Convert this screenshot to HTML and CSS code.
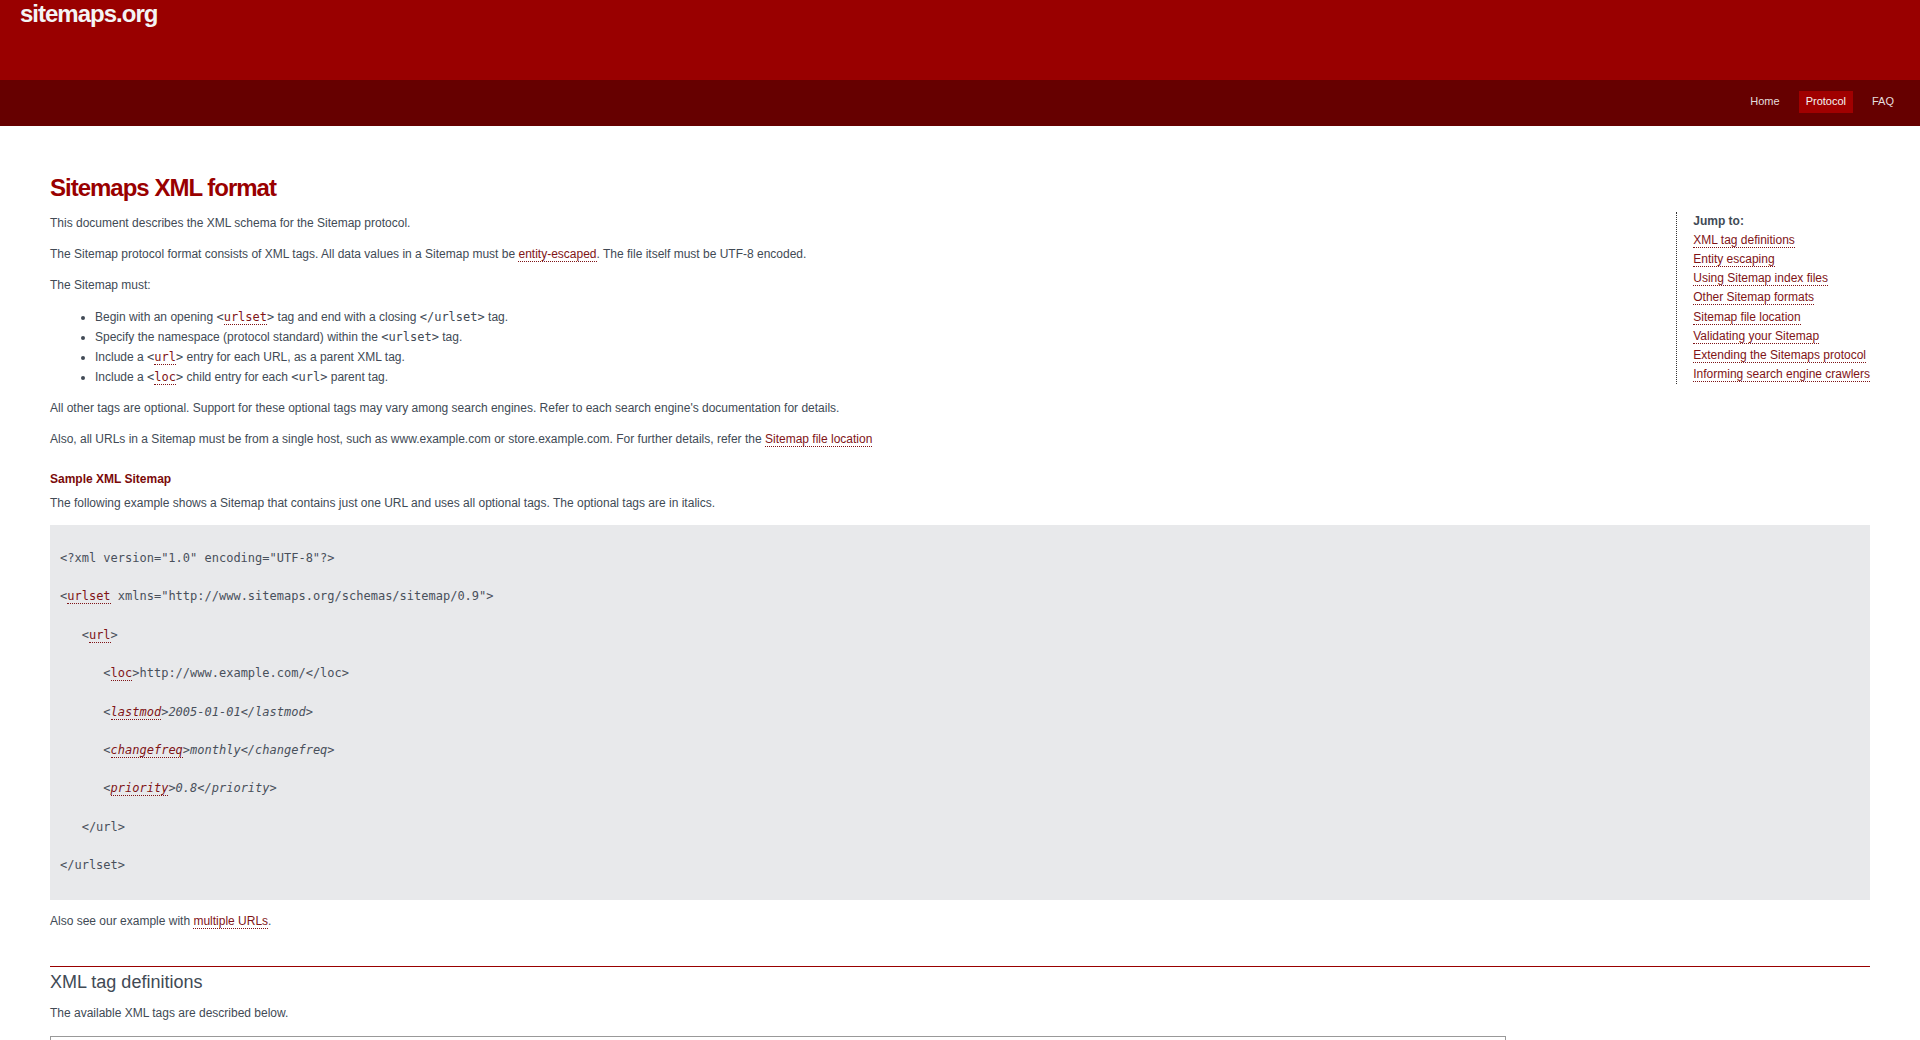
FILE: index.html
```html
<!DOCTYPE html>
<html lang="en">
<head>
<meta charset="utf-8">
<title>sitemaps.org - Protocol</title>
<link rel="stylesheet" href="styles.css">
</head>
<body>
<header class="top">
  <div class="brand"><a class="brand-link" href="#">sitemaps.org</a></div>
</header>
<nav class="navbar">
  <a class="nav-item" href="#">Home</a>
  <a class="nav-item active" href="#">Protocol</a>
  <a class="nav-item" href="#">FAQ</a>
</nav>
<main class="content">
  <h1 class="title">Sitemaps XML format</h1>
  <aside class="jump">
    <div class="jump-title">Jump to:</div>
    <ul class="jump-list">
      <li><a class="lnk" href="#">XML tag definitions</a></li>
      <li><a class="lnk" href="#">Entity escaping</a></li>
      <li><a class="lnk" href="#">Using Sitemap index files</a></li>
      <li><a class="lnk" href="#">Other Sitemap formats</a></li>
      <li><a class="lnk" href="#">Sitemap file location</a></li>
      <li><a class="lnk" href="#">Validating your Sitemap</a></li>
      <li><a class="lnk" href="#">Extending the Sitemaps protocol</a></li>
      <li><a class="lnk" href="#">Informing search engine crawlers</a></li>
    </ul>
  </aside>
  <p class="para">This document describes the XML schema for the Sitemap protocol.</p>
  <p class="para">The Sitemap protocol format consists of XML tags. All data values in a Sitemap must be <a class="lnk" href="#">entity-escaped</a>. The file itself must be UTF-8 encoded.</p>
  <p class="para">The Sitemap must:</p>
  <ul class="bullets">
    <li>Begin with an opening <code class="ic">&lt;<a class="lnk" href="#">urlset</a>&gt;</code> tag and end with a closing <code class="ic">&lt;/urlset&gt;</code> tag.</li>
    <li>Specify the namespace (protocol standard) within the <code class="ic">&lt;urlset&gt;</code> tag.</li>
    <li>Include a <code class="ic">&lt;<a class="lnk" href="#">url</a>&gt;</code> entry for each URL, as a parent XML tag.</li>
    <li>Include a <code class="ic">&lt;<a class="lnk" href="#">loc</a>&gt;</code> child entry for each <code class="ic">&lt;url&gt;</code> parent tag.</li>
  </ul>
  <p class="para">All other tags are optional. Support for these optional tags may vary among search engines. Refer to each search engine's documentation for details.</p>
  <p class="para">Also, all URLs in a Sitemap must be from a single host, such as www.example.com or store.example.com. For further details, refer the <a class="lnk" href="#">Sitemap file location</a></p>
  <h3 class="sub">Sample XML Sitemap</h3>
  <p class="para">The following example shows a Sitemap that contains just one URL and uses all optional tags. The optional tags are in italics.</p>
  <div class="code">
    <div class="cl">&lt;?xml version="1.0" encoding="UTF-8"?&gt;</div>
    <div class="cl">&lt;<a class="lnk" href="#">urlset</a> xmlns="http://www.sitemaps.org/schemas/sitemap/0.9"&gt;</div>
    <div class="cl">   &lt;<a class="lnk" href="#">url</a>&gt;</div>
    <div class="cl">      &lt;<a class="lnk" href="#">loc</a>&gt;http://www.example.com/&lt;/loc&gt;</div>
    <div class="cl">      &lt;<a class="lnk" href="#"><i>lastmod</i></a>&gt;<i>2005-01-01&lt;/lastmod&gt;</i></div>
    <div class="cl">      &lt;<a class="lnk" href="#"><i>changefreq</i></a>&gt;<i>monthly&lt;/changefreq&gt;</i></div>
    <div class="cl">      &lt;<a class="lnk" href="#"><i>priority</i></a>&gt;<i>0.8&lt;/priority&gt;</i></div>
    <div class="cl">   &lt;/url&gt;</div>
    <div class="cl">&lt;/urlset&gt;</div>
  </div>
  <p class="para">Also see our example with <a class="lnk" href="#">multiple URLs</a>.</p>
  <h2 class="section">XML tag definitions</h2>
  <p class="para">The available XML tags are described below.</p>
  <table class="defs">
    <thead>
      <tr><th>Attribute</th><th></th><th>Description</th></tr>
    </thead>
    <tbody>
      <tr><td><code>&lt;urlset&gt;</code></td><td>required</td><td>Encapsulates the file and references the current protocol standard.</td></tr>
    </tbody>
  </table>
</main>
</body>
</html>
```

FILE: styles.css
```css
html, body {
  margin: 0;
  padding: 0;
  background: #ffffff;
}

body {
  font-family: "Liberation Sans", Arial, sans-serif;
  font-size: 12px;
  color: #414a55;
}

.top {
  background: #990000;
  height: 80px;
  padding: 0 20px;
  overflow: hidden;
}

.brand {
  font-size: 24px;
  font-weight: bold;
  letter-spacing: -1px;
  line-height: 27px;
}

.brand-link {
  color: #f4f4f4;
  text-decoration: none;
}

.navbar {
  background: #660000;
  height: 35px;
  display: flex;
  justify-content: flex-end;
  align-items: flex-start;
  padding: 11px 19px 0 0;
  gap: 12px;
}

.nav-item {
  font-size: 11px;
  line-height: 12px;
  padding: 4px 7px 6px 7px;
  color: #e4dede;
  text-decoration: none;
}

.nav-item.active {
  background: #a00000;
  color: #f4f4f4;
}

.content {
  padding: 48px 50px 0 50px;
}

.title {
  margin: 0 0 10px 0;
  font-size: 24px;
  line-height: 28px;
  font-weight: bold;
  letter-spacing: -1px;
  color: #990000;
}

.para {
  margin: 12px 0;
  line-height: 19px;
}

.lnk {
  color: #7f1417;
  text-decoration: none;
  border-bottom: 1px dotted #7f1417;
}

.jump {
  float: right;
  margin-top: -0.5px;
  margin-left: 20px;
  border-left: 1px dotted #333333;
  padding-left: 16px;
  line-height: 19.2px;
}

.jump-title {
  font-weight: bold;
}

.jump-list {
  list-style: none;
  margin: 0;
  padding: 0;
}

.bullets {
  margin: 12px 0;
  padding-left: 45px;
  line-height: 20px;
}

.ic {
  font-family: "DejaVu Sans Mono", monospace;
  font-size: 12px;
}

.sub {
  font-size: 12px;
  font-weight: bold;
  line-height: 19px;
  color: #7a0a0a;
  margin: 21px 0 0 0;
}

.sub + .para {
  margin-top: 5px;
}

.code {
  background: #e8e9eb;
  margin: 11px 0 8px 0;
  padding: 14px 10px 16px 10px;
  font-family: "DejaVu Sans Mono", monospace;
  font-size: 12px;
  color: #48505b;
}

.cl {
  white-space: pre;
  line-height: 38.375px;
}

.section {
  font-size: 18px;
  font-weight: normal;
  line-height: 21px;
  color: #414a55;
  border-top: 1px solid #990000;
  padding-top: 5px;
  margin: 35px 0 0 0;
}

.section + .para {
  margin-top: 11px;
}

.defs {
  width: 80%;
  margin-top: 13px;
  border: 1px solid #999999;
  border-collapse: collapse;
}

.defs th, .defs td {
  padding: 10px 8px 4px 8px;
  text-align: left;
}

.defs td {
  border-top: 1px solid #999999;
}
```
